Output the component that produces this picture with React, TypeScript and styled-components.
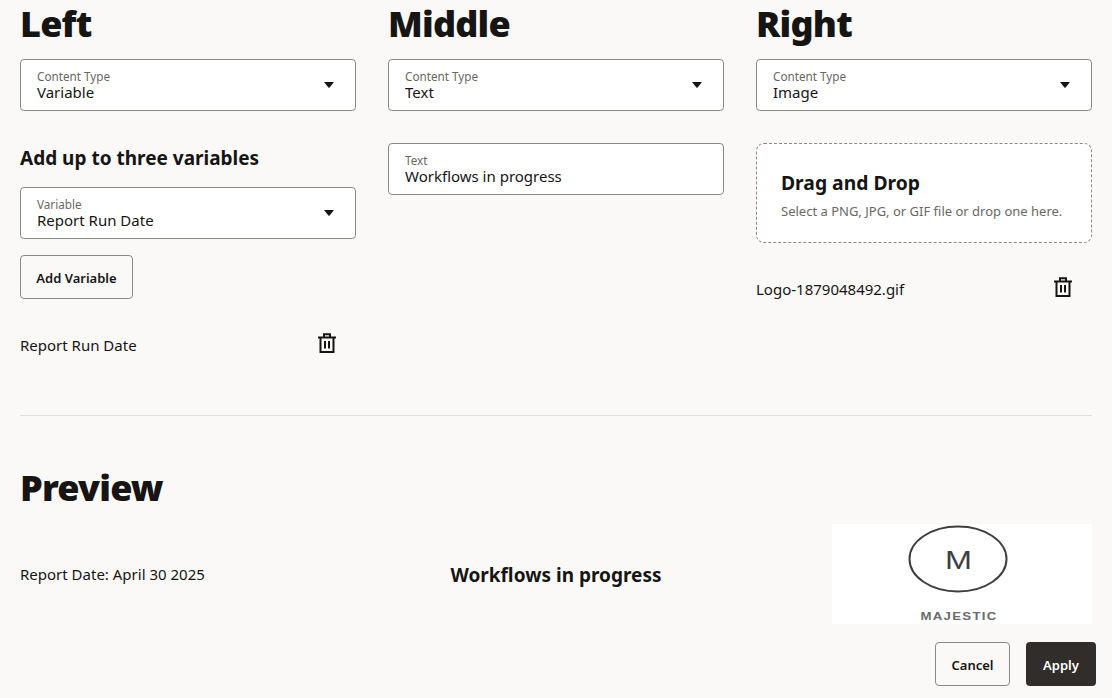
import React from "react";
import styled, { createGlobalStyle } from "styled-components";

const Global = createGlobalStyle`
  html, body { margin: 0; padding: 0; background: #fbf9f8; }
  body { font-family: "Noto Sans", "Open Sans", "Liberation Sans", sans-serif; color: #161513; overflow: hidden; }
`;

const Page = styled.div`
  width: 1112px;
  height: 698px;
  box-sizing: border-box;
  padding: 0 20px;
  overflow: hidden;
`;

const Columns = styled.div`
  display: grid;
  grid-template-columns: repeat(3, 336px);
  column-gap: 32px;
  height: 415px;
  border-bottom: 1px solid #e4e1dd;
`;

const Column = styled.section`
  display: flex;
  flex-direction: column;
  align-items: flex-start;
`;

const Heading = styled.h1`
  margin: 0;
  height: 59px;
  font-size: 36px;
  line-height: 48px;
  font-weight: 900;
  letter-spacing: -0.8px;
  color: #161513;
`;

const FieldBox = styled.div`
  width: 336px;
  height: 52px;
  box-sizing: border-box;
  background: #fff;
  border: 1px solid #8b8884;
  border-radius: 4px;
  padding: 9px 16px 0;
  display: flex;
  align-items: flex-start;
  justify-content: space-between;
`;

const FieldText = styled.div`
  display: flex;
  flex-direction: column;
`;

const FieldLabel = styled.span`
  font-size: 11.7px;
  line-height: 14px;
  color: #6a6762;
`;

const FieldValue = styled.span`
  font-size: 15px;
  line-height: 19px;
  color: #161513;
`;

const Caret = styled.svg`
  width: 10px;
  height: 6px;
  margin: 13px 5px 0 0;
  fill: #161513;
`;

const Field = ({ label, value, select }: { label: string; value: string; select?: boolean }) => (
  <FieldBox>
    <FieldText>
      <FieldLabel>{label}</FieldLabel>
      <FieldValue>{value}</FieldValue>
    </FieldText>
    {select && (
      <Caret viewBox="0 0 10 6">
        <path d="M0 0h10L5.6 5.4a.8.8 0 0 1-1.2 0z" />
      </Caret>
    )}
  </FieldBox>
);

const SubHeading = styled.h2<{ $top: number }>`
  margin: ${(p) => p.$top}px 0 16px;
  font-size: 19px;
  line-height: 26px;
  font-weight: 700;
`;

const SecondaryButton = styled.button<{ $w: number }>`
  width: ${(p) => p.$w}px;
  height: 44px;
  box-sizing: border-box;
  padding: 1px 0 0;
  background: transparent;
  border: 1px solid #8b8884;
  border-radius: 4px;
  font: 600 13px/20px "Noto Sans", sans-serif;
  color: #161513;
`;

const AddButton = styled(SecondaryButton)`
  margin-top: 16px;
`;

const ItemRow = styled.div<{ $top: number }>`
  width: 336px;
  height: 32px;
  margin-top: ${(p) => p.$top}px;
  display: flex;
  align-items: center;
  justify-content: space-between;
  font-size: 15px;
  line-height: 22px;
`;

const TrashIcon = styled.svg`
  width: 20px;
  height: 20px;
  margin: 0 19px 5px 0;
  fill: none;
  stroke: #161513;
  stroke-width: 2;
`;

const Trash = () => (
  <TrashIcon viewBox="0 0 20 20">
    <path d="M1 4.5h18M3.5 4.5V19h13V4.5M7 4.5V1.2h6v3.3M8 8v7.5M12 8v7.5" />
  </TrashIcon>
);

const DropZone = styled.div`
  width: 336px;
  height: 100px;
  box-sizing: border-box;
  margin-top: 32px;
  padding: 26px 24px 0;
  background: #fff;
  border: 1px dashed #8b8884;
  border-radius: 8px;
`;

const DropTitle = styled.div`
  font-size: 19.3px;
  line-height: 26px;
  font-weight: 700;
`;

const DropHint = styled.div`
  margin-top: 7px;
  font-size: 13px;
  line-height: 17px;
  color: #6a6762;
`;

const TextFieldWrap = styled.div`
  margin-top: 32px;
`;

const PreviewHeading = styled(Heading)`
  margin-top: 48px;
  height: 60px;
`;

const PreviewRow = styled.div`
  display: grid;
  grid-template-columns: 1fr 1fr 1fr;
  align-items: center;
  height: 100px;
  font-size: 15px;
`;

const PreviewCenter = styled.div`
  justify-self: center;
  padding-top: 2px;
  font-size: 19px;
  font-weight: 700;
  line-height: 27px;
`;

const LogoBox = styled.div`
  justify-self: end;
  width: 260px;
  height: 100px;
  background: #fff;
`;

const LogoSvg = styled.svg`
  display: block;
  width: 260px;
  height: 100px;
`;

const Footer = styled.div`
  display: flex;
  justify-content: flex-end;
  gap: 16px;
  margin: 18px -4px 0 0;
`;

const PrimaryButton = styled.button`
  width: 70px;
  height: 44px;
  padding: 1px 0 0;
  background: #312d2a;
  border: none;
  border-radius: 4px;
  font: 600 13px/20px "Noto Sans", sans-serif;
  color: #fff;
`;

export default function App() {
  return (
    <Page>
      <Global />
      <Columns>
        <Column>
          <Heading>Left</Heading>
          <Field label="Content Type" value="Variable" select />
          <SubHeading $top={34}>Add up to three variables</SubHeading>
          <Field label="Variable" value="Report Run Date" select />
          <AddButton $w={113}>Add Variable</AddButton>
          <ItemRow $top={30}>
            <span>Report Run Date</span>
            <Trash />
          </ItemRow>
        </Column>
        <Column>
          <Heading>Middle</Heading>
          <Field label="Content Type" value="Text" select />
          <TextFieldWrap>
            <Field label="Text" value="Workflows in progress" />
          </TextFieldWrap>
        </Column>
        <Column>
          <Heading>Right</Heading>
          <Field label="Content Type" value="Image" select />
          <DropZone>
            <DropTitle>Drag and Drop</DropTitle>
            <DropHint>Select a PNG, JPG, or GIF file or drop one here.</DropHint>
          </DropZone>
          <ItemRow $top={30}>
            <span>Logo-1879048492.gif</span>
            <Trash />
          </ItemRow>
        </Column>
      </Columns>
      <PreviewHeading>Preview</PreviewHeading>
      <PreviewRow>
        <span>Report Date: April 30 2025</span>
        <PreviewCenter>Workflows in progress</PreviewCenter>
        <LogoBox>
          <LogoSvg viewBox="0 0 260 100">
            <ellipse cx="126" cy="35" rx="48.5" ry="32.5" fill="none" stroke="#3f3f3f" strokeWidth="2" />
            <text x="113" y="45" textLength="27" lengthAdjust="spacingAndGlyphs" fontSize="25" fontFamily="Liberation Sans, sans-serif" fill="#3f3f3f">M</text>
            <text x="88.5" y="96" textLength="77" lengthAdjust="spacingAndGlyphs" fontSize="10.5" fontWeight="700" letterSpacing="1" fontFamily="Liberation Sans, sans-serif" fill="#6a6a6a">MAJESTIC</text>
          </LogoSvg>
        </LogoBox>
      </PreviewRow>
      <Footer>
        <SecondaryButton $w={75}>Cancel</SecondaryButton>
        <PrimaryButton>Apply</PrimaryButton>
      </Footer>
    </Page>
  );
}
